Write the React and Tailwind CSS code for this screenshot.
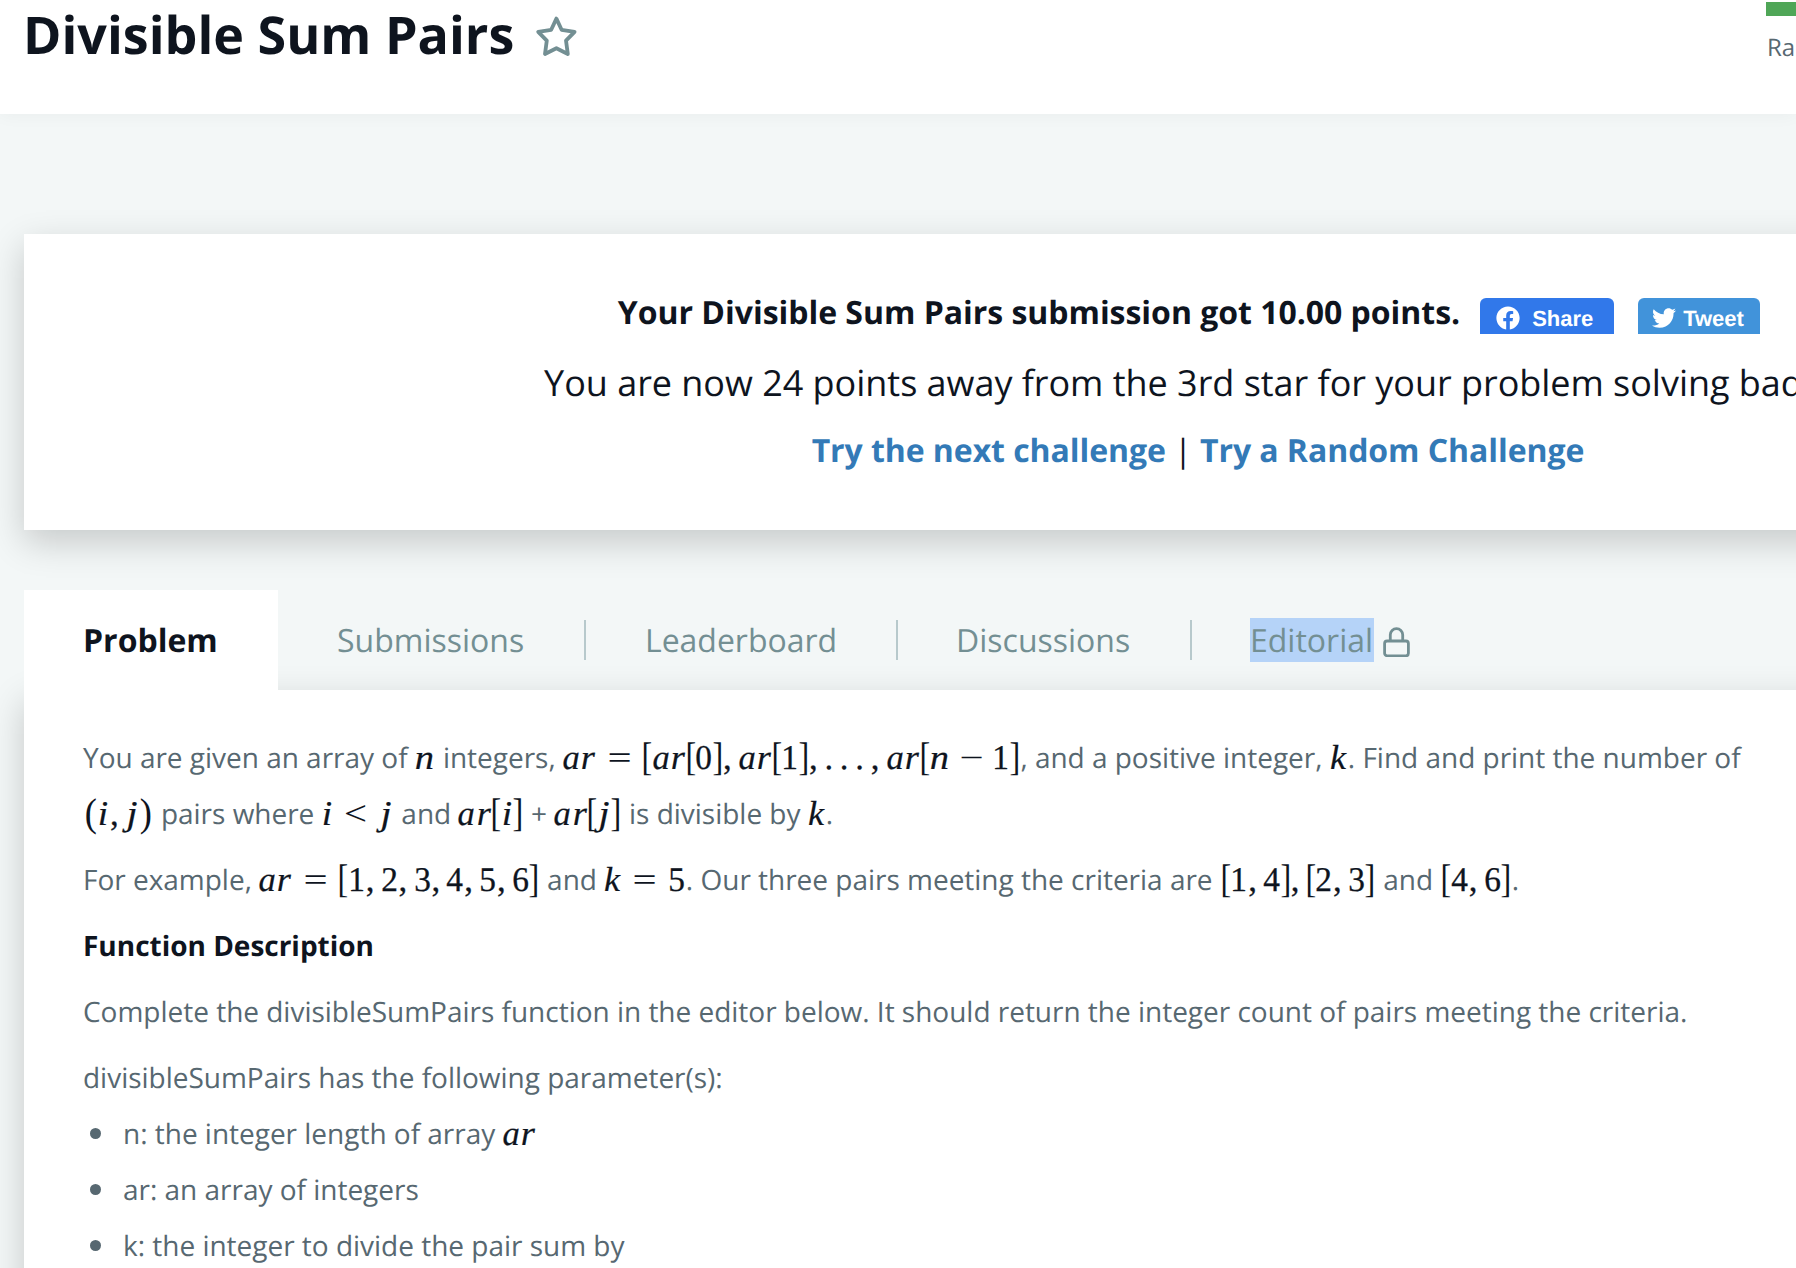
import React from "react";
import { FaFacebook, FaTwitter } from "react-icons/fa";

// w: width of the cell in em; own: natural advance of the glyph in the serif face
const GLYPHS = {
  a: { w: 0.529, own: 0.53, it: true },
  r: { w: 0.451, own: 0.43, it: true },
  n: { w: 0.6, own: 0.54, it: true },
  i: { w: 0.345, own: 0.32, it: true },
  j: { w: 0.412, own: 0.36, it: true },
  k: { w: 0.521, own: 0.5, it: true },
  ",": { w: 0.278, after: 0.167, own: 0.278 },
  ".": { w: 0.278, after: 0.167, own: 0.278 },
  "=": { w: 0.778, before: 0.278, after: 0.278, own: 0.63, thin: true },
  "<": { w: 0.778, before: 0.278, after: 0.278, own: 0.66, thin: true },
  "−": { w: 0.778, before: 0.222, after: 0.222, own: 0.63, thin: true },
  "(": { w: 0.389, own: 0.37, tall: true },
  ")": { w: 0.389, own: 0.37, tall: true },
  "[": { w: 0.278, own: 0.3, tall: true },
  "]": { w: 0.278, own: 0.3, tall: true },
};

function M({ children }) {
  return (
    <span className="relative top-px -ml-px mr-px inline-block whitespace-nowrap font-['Liberation_Serif',serif] text-[34.7px] leading-none tracking-normal text-[#0e141e]">
      {[...children].map((c, i) => {
        const g = GLYPHS[c] || { w: 0.5, own: 0.52 };
        const cls = g.it
          ? "italic [-webkit-text-stroke:0.2px_#0e141e]"
          : g.tall
            ? "origin-[50%_62%]"
            : g.thin
              ? ""
              : "[-webkit-text-stroke:0.3px_#0e141e]";
        return (
          <span
            key={i}
            className={"inline-flex justify-center " + cls}
            style={{
              width: g.w + "em",
              marginLeft: (g.before || 0) + "em",
              marginRight: (g.after || 0) + "em",
              transform: `scale(${g.w / g.own}, ${g.tall ? 1.15 : 1})`,
            }}
          >
            {c}
          </span>
        );
      })}
    </span>
  );
}

function Tab({ children, className }) {
  return (
    <div className={"flex h-10 items-center border-[#b7c9cc] " + className}>{children}</div>
  );
}

function Item({ children }) {
  return (
    <li className="flex items-center">
      <span className="-mt-0.5 ml-[7px] mr-[22px] size-[11px] rounded-full bg-[#576871]" />
      <span>{children}</span>
    </li>
  );
}

export default function App() {
  return (
    <div className="h-[1268px] w-full overflow-hidden bg-[#f3f7f7] font-['Open_Sans',sans-serif] text-[#0e141e] [text-rendering:geometricPrecision]">
      <header className="flex h-[114px] justify-between bg-white pl-[23px] shadow-[0_2px_16px_rgba(0,0,0,0.04)]">
        <div className="flex h-[72px] items-center">
          <h1 className="w-[512px] whitespace-nowrap pb-0.5 text-[52px] font-bold leading-[72px]">Divisible Sum Pairs</h1>
          <svg className="size-[43px]" viewBox="0 0 43 43" fill="none" stroke="#738f93" strokeWidth="3.8" strokeLinejoin="round">
            <path d="M21.4 3.6 L26.6 14.8 L39.6 16.8 L31 25.6 L32.8 39 L21.4 33.2 L10 39 L11.8 25.6 L3.2 16.8 L16.2 14.8 Z" />
          </svg>
        </div>
        <div className="w-[30px] overflow-hidden pt-0.5">
          <div className="h-3.5 bg-[#4fa657]" />
          <div className="mt-4 pl-px text-2xl text-[#576871]">Ra</div>
        </div>
      </header>

      <main className="w-[2372px] pl-6 pt-[120px]">
        <section className="h-[296px] bg-white pt-[49px] shadow-[0_12px_34px_rgba(0,0,0,0.19)]">
          <div className="flex h-[60px] items-start justify-center pr-0.5">
            <span className="whitespace-nowrap text-[32px] font-bold leading-[59px] tracking-[-0.03px]">
              Your Divisible Sum Pairs submission got 10.00 points.
            </span>
            <div className="ml-5 mt-[15px] flex h-9 w-[134px] items-center rounded-t-[6px] bg-[#3178ea] pl-4 font-['Liberation_Sans',sans-serif] text-[22px] font-bold text-white">
              <FaFacebook className="mt-1 size-6" />
              <span className="ml-3 mt-[5px]">Share</span>
            </div>
            <div className="ml-6 mr-4 mt-[15px] flex h-9 w-[122px] items-center rounded-t-[6px] bg-[#4193da] pl-3.5 font-['Liberation_Sans',sans-serif] text-[22px] font-bold text-white">
              <FaTwitter className="mt-1 size-6" />
              <span className="ml-[7px] mt-[5px]">Tweet</span>
            </div>
          </div>
          <p className="mt-[10px] whitespace-nowrap text-center text-[36px] leading-[60px] tracking-[-0.03px]">
            You are now 24 points away from the 3rd star for your problem solving badge.
          </p>
          <p className="mt-2 whitespace-nowrap text-center text-[32px] leading-[60px] tracking-[-0.06px]">
            <b className="text-[#337ab7]">Try the next challenge</b> | <b className="text-[#337ab7]">Try a Random Challenge</b>
          </p>
        </section>

        <div className="mt-[60px] flex h-[100px] items-center text-[32px] text-[#738f93]">
          <div className="relative flex h-full w-[254px] items-center bg-white pl-[59px] pt-0.5 font-bold text-[#0e141e]">Problem</div>
          <Tab className="w-[308px] border-r-2 pl-[59px] pt-0.5">Submissions</Tab>
          <Tab className="w-[312px] border-r-2 pl-[59px] pt-0.5 tracking-[-0.03px]">Leaderboard</Tab>
          <Tab className="w-[294px] border-r-2 pl-[58px] pt-0.5">Discussions</Tab>
          <Tab className="pl-[58px]">
            <span className="h-[44px] w-[124px] bg-[#b5d3f8] leading-[46px]">Editorial</span>
            <svg className="ml-2 size-[34px]" viewBox="0 0 34 34" fill="none" stroke="#738f93" strokeWidth="2.8">
              <rect x="2.6" y="18" width="23.8" height="14.8" rx="2.5" />
              <path d="M8.3 18 V11.8 a6.2 6.2 0 0 1 12.4 0 V18" />
            </svg>
          </Tab>
        </div>

        <section className="h-[700px] bg-white pl-[59px] pt-10 text-[28px] leading-[56px] tracking-[-0.015px] text-[#576871] shadow-[0_12px_34px_rgba(0,0,0,0.19)]">
          <p className="whitespace-nowrap">
            You are given an array of <M>n</M> integers, <M>ar=[ar[0],ar[1],...,ar[n−1]</M>, and a positive integer, <M>k</M>. Find and print the number of
            <br />
            <span className="inline-block w-0.5" />
            <M>(i,j)</M> pairs where <M>{"i<j"}</M> and <M>ar[i]</M> + <M>ar[j]</M> is divisible by <M>k</M>.
          </p>
          <p className="mt-2.5 whitespace-nowrap">
            For example, <M>ar=[1,2,3,4,5,6]</M> and <M>k=5</M>. Our three pairs meeting the criteria are <span className="inline-block w-0.5" />
            <M>[1,4],[2,3]</M> and <span className="inline-block w-0.5" />
            <M>[4,6]</M>.
          </p>
          <p className="mt-2.5 font-bold text-[#0e141e]">Function Description</p>
          <p className="mt-2.5">Complete the divisibleSumPairs function in the editor below. It should return the integer count of pairs meeting the criteria.</p>
          <p className="mt-2.5">divisibleSumPairs has the following parameter(s):</p>
          <ul>
            <Item>n: the integer length of array <M>ar</M></Item>
            <Item>ar: an array of integers</Item>
            <Item>k: the integer to divide the pair sum by</Item>
          </ul>
        </section>
      </main>
    </div>
  );
}
